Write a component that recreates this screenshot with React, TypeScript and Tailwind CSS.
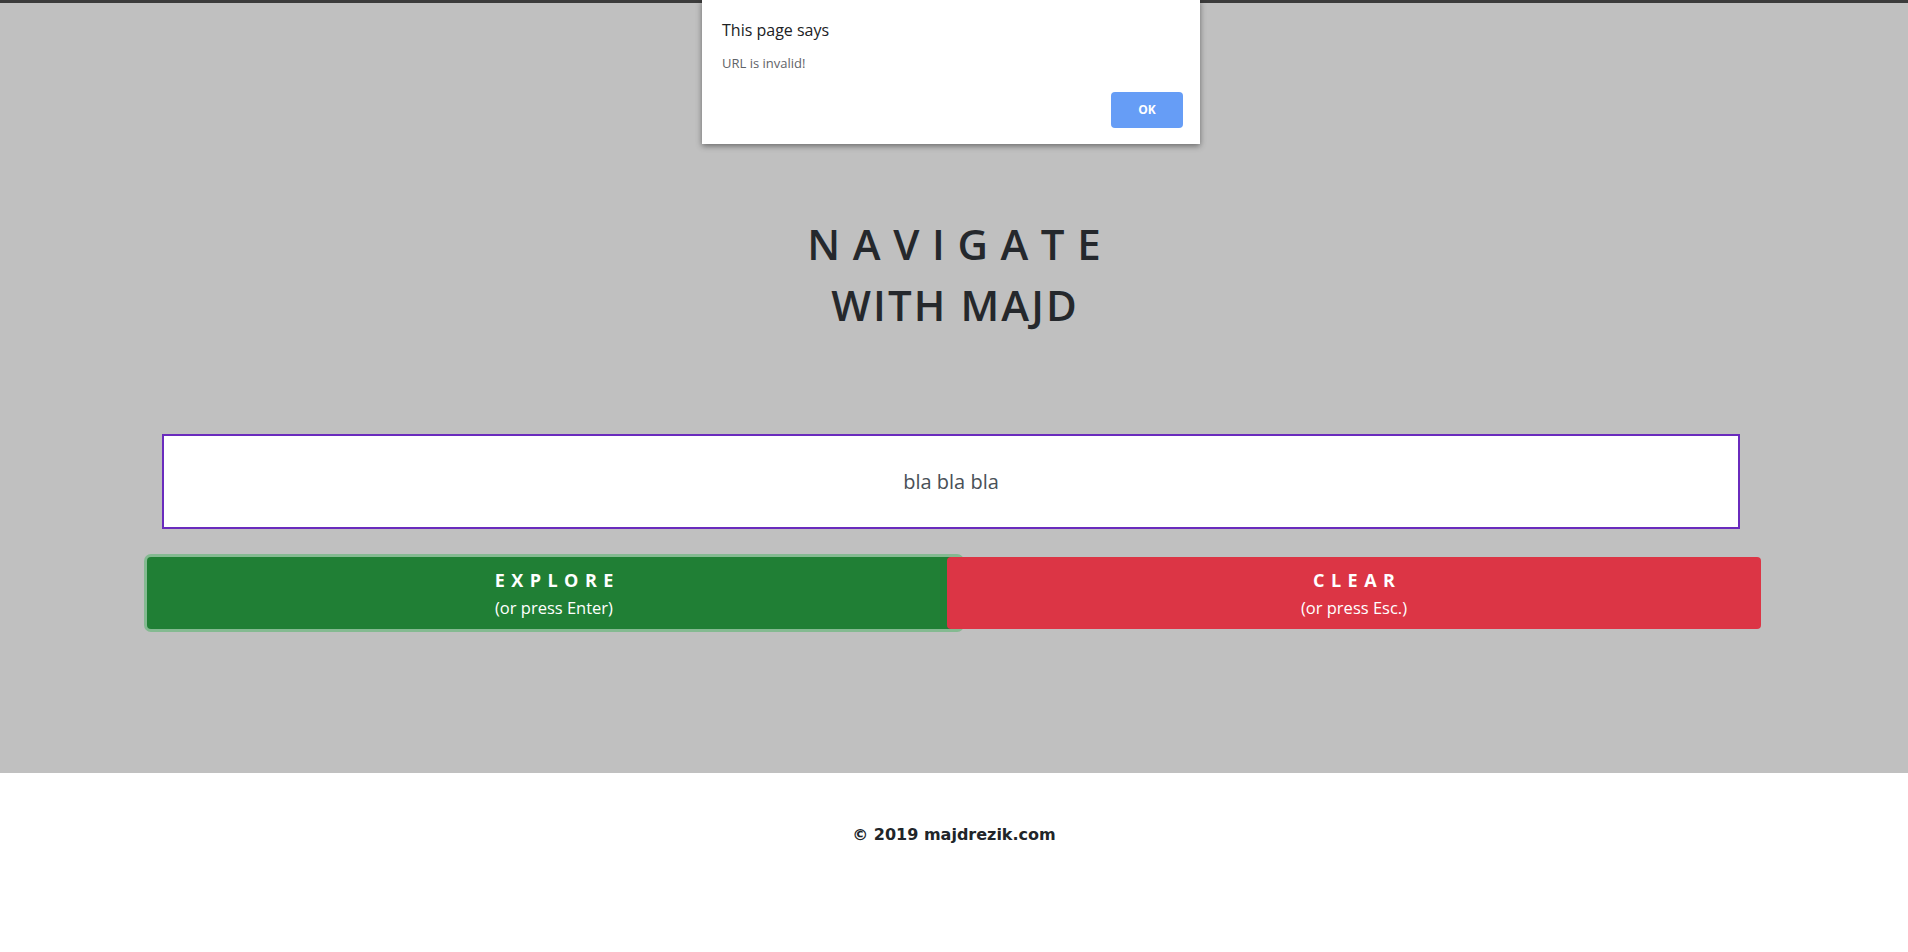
export default function App() {
  return (
    <div className="relative min-h-screen bg-white" style={{ fontFamily: '"Open Sans", "Noto Sans", sans-serif' }}>
      {/* main stage */}
      <section className="border-t-[3px] border-[#3b3b3b] bg-[#c0c0c0] pt-[210px] pb-[144px]">
        <h1 className="text-center text-[42px] font-semibold leading-[61px] text-[#25282c]">
          <span className="block tracking-[0.3em] pl-[0.3em]">NAVIGATE</span>
          <span className="block tracking-[0.05em] pl-[0.05em]">WITH MAJD</span>
        </h1>

        <div className="mx-auto mt-[99px] w-[1614px]">
          <div className="ml-[15px] flex h-[95px] w-[1578px] items-center justify-center border-2 border-[#6a2bbd] bg-white">
            <span className="text-[20px] text-[#495057]">bla bla bla</span>
          </div>

          <div className="mt-[28px] flex">
            <button className="flex h-[72px] w-[814px] flex-col items-center justify-center rounded bg-[#207f35] text-white shadow-[0_0_0_3px_rgba(72,180,97,0.5)]">
              <span className="text-[18px] font-bold leading-[24px] tracking-[0.36em] pl-[0.36em]">EXPLORE</span>
              <span className="mt-[5px] text-[16.5px] leading-[22px]">(or press Enter)</span>
            </button>
            <button className="relative -ml-[14px] flex h-[72px] w-[814px] flex-col items-center justify-center rounded bg-[#dc3545] text-white">
              <span className="text-[18px] font-bold leading-[24px] tracking-[0.36em] pl-[0.36em]">CLEAR</span>
              <span className="mt-[5px] text-[16.5px] leading-[22px]">(or press Esc.)</span>
            </button>
          </div>
        </div>
      </section>

      <footer className="pt-[50px] text-center">
        <p className="text-[16px] font-bold text-[#212529]" style={{ fontFamily: '"DejaVu Sans", Verdana, sans-serif' }}>
          © 2019 majdrezik.com
        </p>
      </footer>

      {/* browser alert */}
      <div className="absolute left-[702px] top-0 h-[144px] w-[498px] bg-white shadow-[0_2px_6px_rgba(0,0,0,0.45)]">
        <p className="pl-[20px] pt-[20px] text-[16px] leading-[20px] text-[#202124]">This page says</p>
        <p className="mt-[15px] pl-[20px] text-[13px] leading-[16px] text-[#5f6368]">URL is invalid!</p>
        <button className="absolute left-[409px] top-[92px] h-[36px] w-[72px] rounded bg-[#669df6] text-[12px] font-bold text-white">
          OK
        </button>
      </div>
    </div>
  );
}
